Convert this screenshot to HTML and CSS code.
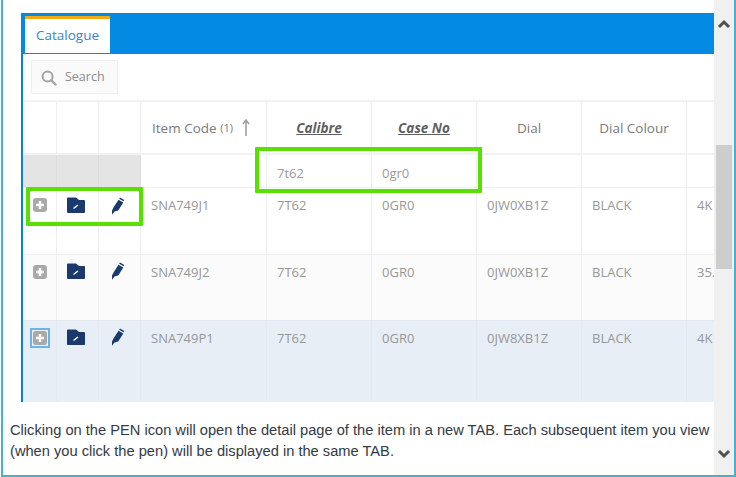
FILE: index.html
```html
<!DOCTYPE html>
<html lang="en">
<head>
<meta charset="utf-8">
<title>Catalogue help</title>
<link rel="stylesheet" href="styles.css">
</head>
<body>
<div class="window">
  <main class="content">
    <section class="shot">
      <div class="tabbar"><div class="tab">Catalogue</div></div>
      <div class="toolbar">
        <div class="search">
          <svg class="search-icon" width="16" height="16" viewBox="0 0 16 16"><circle cx="6.6" cy="6.6" r="5" fill="none" stroke="#a3a3a3" stroke-width="2"/><path d="M10.3 10.3l4.2 4.2" stroke="#a3a3a3" stroke-width="2.4" stroke-linecap="round"/></svg>
          <span>Search</span>
        </div>
      </div>
      <div class="grid">
        <div class="row head">
          <div class="cell c1"></div><div class="cell c2"></div><div class="cell c3"></div>
          <div class="cell c4 item-code">Item Code&nbsp;<small>(1)</small><svg class="sort" width="8" height="18" viewBox="0 0 8 18"><path d="M4 17V2M1 5l3-4 3 4" fill="none" stroke="#a0a0a0" stroke-width="1.6"/></svg></div>
          <div class="cell c5 filtered">Calibre</div>
          <div class="cell c5 filtered">Case No</div>
          <div class="cell c5 plain">Dial</div>
          <div class="cell c5 plain">Dial Colour</div>
          <div class="cell c9"></div>
        </div>
        <div class="row filter">
          <div class="cell c1 grey"></div><div class="cell c2 grey"></div><div class="cell c3 grey"></div>
          <div class="cell c4"></div>
          <div class="cell c5">7t62</div>
          <div class="cell c5">0gr0</div>
          <div class="cell c5"></div><div class="cell c5"></div><div class="cell c9"></div>
        </div>
        <div class="row data r1">
          <div class="cell c1"><svg class="ico" width="14" height="14" viewBox="0 0 14 14"><use href="#plus"/></svg></div>
          <div class="cell c2"><svg class="ico" width="18" height="16" viewBox="0 0 18 16"><use href="#folder"/></svg></div>
          <div class="cell c3"><svg class="ico" width="14" height="18" viewBox="0 0 14 18"><use href="#pen"/></svg></div>
          <div class="cell c4">SNA749J1</div><div class="cell c5">7T62</div><div class="cell c5">0GR0</div><div class="cell c5">0JW0XB1Z</div><div class="cell c5">BLACK</div><div class="cell c9">4K</div>
        </div>
        <div class="row data r2">
          <div class="cell c1"><svg class="ico" width="14" height="14" viewBox="0 0 14 14"><use href="#plus"/></svg></div>
          <div class="cell c2"><svg class="ico" width="18" height="16" viewBox="0 0 18 16"><use href="#folder"/></svg></div>
          <div class="cell c3"><svg class="ico" width="14" height="18" viewBox="0 0 14 18"><use href="#pen"/></svg></div>
          <div class="cell c4">SNA749J2</div><div class="cell c5">7T62</div><div class="cell c5">0GR0</div><div class="cell c5">0JW0XB1Z</div><div class="cell c5">BLACK</div><div class="cell c9">35.</div>
        </div>
        <div class="row data r3">
          <div class="cell c1"><span class="focus"><svg width="14" height="14" viewBox="0 0 14 14"><use href="#plus"/></svg></span></div>
          <div class="cell c2"><svg class="ico" width="18" height="16" viewBox="0 0 18 16"><use href="#folder"/></svg></div>
          <div class="cell c3"><svg class="ico" width="14" height="18" viewBox="0 0 14 18"><use href="#pen"/></svg></div>
          <div class="cell c4">SNA749P1</div><div class="cell c5">7T62</div><div class="cell c5">0GR0</div><div class="cell c5">0JW8XB1Z</div><div class="cell c5">BLACK</div><div class="cell c9">4K</div>
        </div>
      </div>
      <div class="mark mark-icons"></div>
      <div class="mark mark-filter"></div>
    </section>
    <p class="note">Clicking on the PEN icon will open the detail page of the item in a new TAB. Each subsequent item you view (when you click the pen) will be displayed in the same TAB.</p>
  </main>
  <aside class="scrollbar">
    <svg class="arrow" width="14" height="10" viewBox="0 0 14 10"><path d="M2 8l5-5 5 5" fill="none" stroke="#505050" stroke-width="3"/></svg>
    <div class="track"><div class="thumb"></div></div>
    <svg class="arrow" width="14" height="10" viewBox="0 0 14 10"><path d="M2 2l5 5 5-5" fill="none" stroke="#505050" stroke-width="3"/></svg>
  </aside>
</div>
<svg class="defs" width="0" height="0">
  <defs>
    <g id="plus"><rect width="14" height="14" rx="3" fill="#a9a9a9"/><path d="M7 3v8M3 7h8" stroke="#fff" stroke-width="2.4"/></g>
    <g id="folder"><path d="M0 1.500Q0 .5 1 .5H9L12 3H17Q18 3 18 4V15Q18 16 17 16H1Q0 16 0 15Z" fill="#1a3a6e"/><path d="M6.500 11.500l4.500-3.500" stroke="#fff" stroke-width="1.500"/></g>
    <g id="pen"><path d="M7.500 2.800L12.300 5.600 7.200 13.400 3.500 14.600 1 17.800V13.500L2.500 10.600Z" fill="#1a3a6e"/><path d="M9 .5L13.300 3 12.500 4.300 8.200 1.800Z" fill="#1a3a6e"/></g>
  </defs>
</svg>
</body>
</html>
```
FILE: styles.css
```css
* { box-sizing: border-box; }
html, body { margin: 0; padding: 0; background: #fff; }
body { width: 736px; height: 477px; overflow: hidden; }
.window {
  display: flex;
  width: 735px;
  height: 477px;
  margin-left: 1px;
  border-left: 2px solid #46b0cf;
  border-right: 2px solid #46b0cf;
  border-bottom: 2px solid #46b0cf;
}
.content { width: 711px; padding: 13px 0 0 18px; flex: none; overflow: hidden; position: relative; }
.shot {
  position: relative;
  width: 693px;
  height: 389px;
  border-left: 2px solid #0a82cc;
  font-family: "Open Sans", sans-serif;
  color: #8f8f8f;
}
.tabbar { height: 41px; background: #038ae3; margin-left: -2px; padding: 3px 0 0 4px; }
.tab {
  width: 85px;
  height: 37px;
  background: #fff;
  border-top: 3px solid #f5a80f;
  color: #3a86bd;
  font-size: 13.5px;
  line-height: 33px;
  text-align: center;
}
.toolbar { height: 46px; padding: 6px 0 0 8px; }
.search {
  display: flex;
  align-items: center;
  gap: 8px;
  width: 87px;
  height: 34px;
  background: #fafafa;
  border: 1px solid #efefef;
  padding: 0 0 2px 9px;
  color: #8a8a8a;
  font-size: 12.5px;
}
.search-icon { flex: none; margin-top: 3px; }
.grid { border-top: 2px solid #f2f2f2; }
.row { display: flex; }
.cell { flex: none; border-right: 1px solid #eeeeee; font-size: 13px; padding-left: 10px; }
.c1 { width: 34px; }
.c2 { width: 42px; }
.c3 { width: 42px; }
.c4 { width: 126px; }
.c5 { width: 105px; }
.c9 { width: 27px; border-right: 0; overflow: hidden; white-space: nowrap; }
.head { height: 53px; border-bottom: 2px solid #f2f2f2; }
.head .cell { display: flex; align-items: center; color: #7a7a7a; font-size: 13.5px; }
.head .c4 { padding-left: 11px; }
.item-code small { font-size: 11px; margin-right: 9px; }
.head .plain { justify-content: center; padding: 0; }
.head .filtered {
  justify-content: center;
  padding: 0;
  font-style: italic;
  font-weight: 700;
  text-decoration: underline;
  color: #5f5f5f;
}
.filter { height: 33px; border-bottom: 1px solid #eeeeee; }
.filter .cell { padding-top: 9px; line-height: 18px; color: #9a9a9a; }
.filter .grey { background: #e4e4e4; border-right-color: #dddddd; }
.data .cell { line-height: 18px; color: #979797; }
.r1 .cell, .r2 .cell { padding-top: 8px; }
.r3 .cell { padding-top: 8px; }
.r1 { height: 67px; border-bottom: 1px solid #eeeeee; }
.r2 { height: 65px; background: #fbfbfb; }
.r3 { height: 82px; background: #e7eef6; border-top: 1px solid #e4e9ef; }
.r3 .cell { border-right-color: #e3e9f0; }
.data .ico { display: block; }
.data .c1, .data .c2, .data .c3 { padding: 0; }
.data .c1 .ico { margin: 10px 0 0 10px; }
.data .c2 .ico { margin: 8px 0 0 10px; }
.data .c3 .ico { margin: 7px 0 0 12px; }
.r1 .c2 .ico { margin-top: 9px; }
.r1 .c3 .ico { margin-top: 9px; }
.focus {
  display: block;
  width: 20px;
  height: 20px;
  margin: 7px 0 0 7px;
  padding: 1px;
  border: 2px solid #6db4e8;
}
.focus svg { display: block; }
.mark { position: absolute; border: 4px solid #5ae000; border-radius: 1px; }
.mark-icons { left: 3px; top: 174px; width: 117px; height: 39px; }
.mark-filter { left: 232px; top: 134px; width: 227px; height: 46px; }
.note {
  margin: 18px 0 0 -11px;
  width: 702px;
  font-family: "Liberation Sans", Arial, sans-serif;
  font-size: 14.67px;
  line-height: 21px;
  color: #333a44;
}
.scrollbar {
  width: 20px;
  flex: none;
  background: #f0f0f0;
  display: flex;
  flex-direction: column;
  align-items: center;
  padding-top: 19px;
}
.arrow { flex: none; }
.track { flex: 1; width: 100%; padding: 116px 2px 0; }
.thumb { height: 124px; background: #cdcdcd; }
.scrollbar .arrow:last-child { margin-bottom: 16px; }
.defs { position: absolute; }
```
